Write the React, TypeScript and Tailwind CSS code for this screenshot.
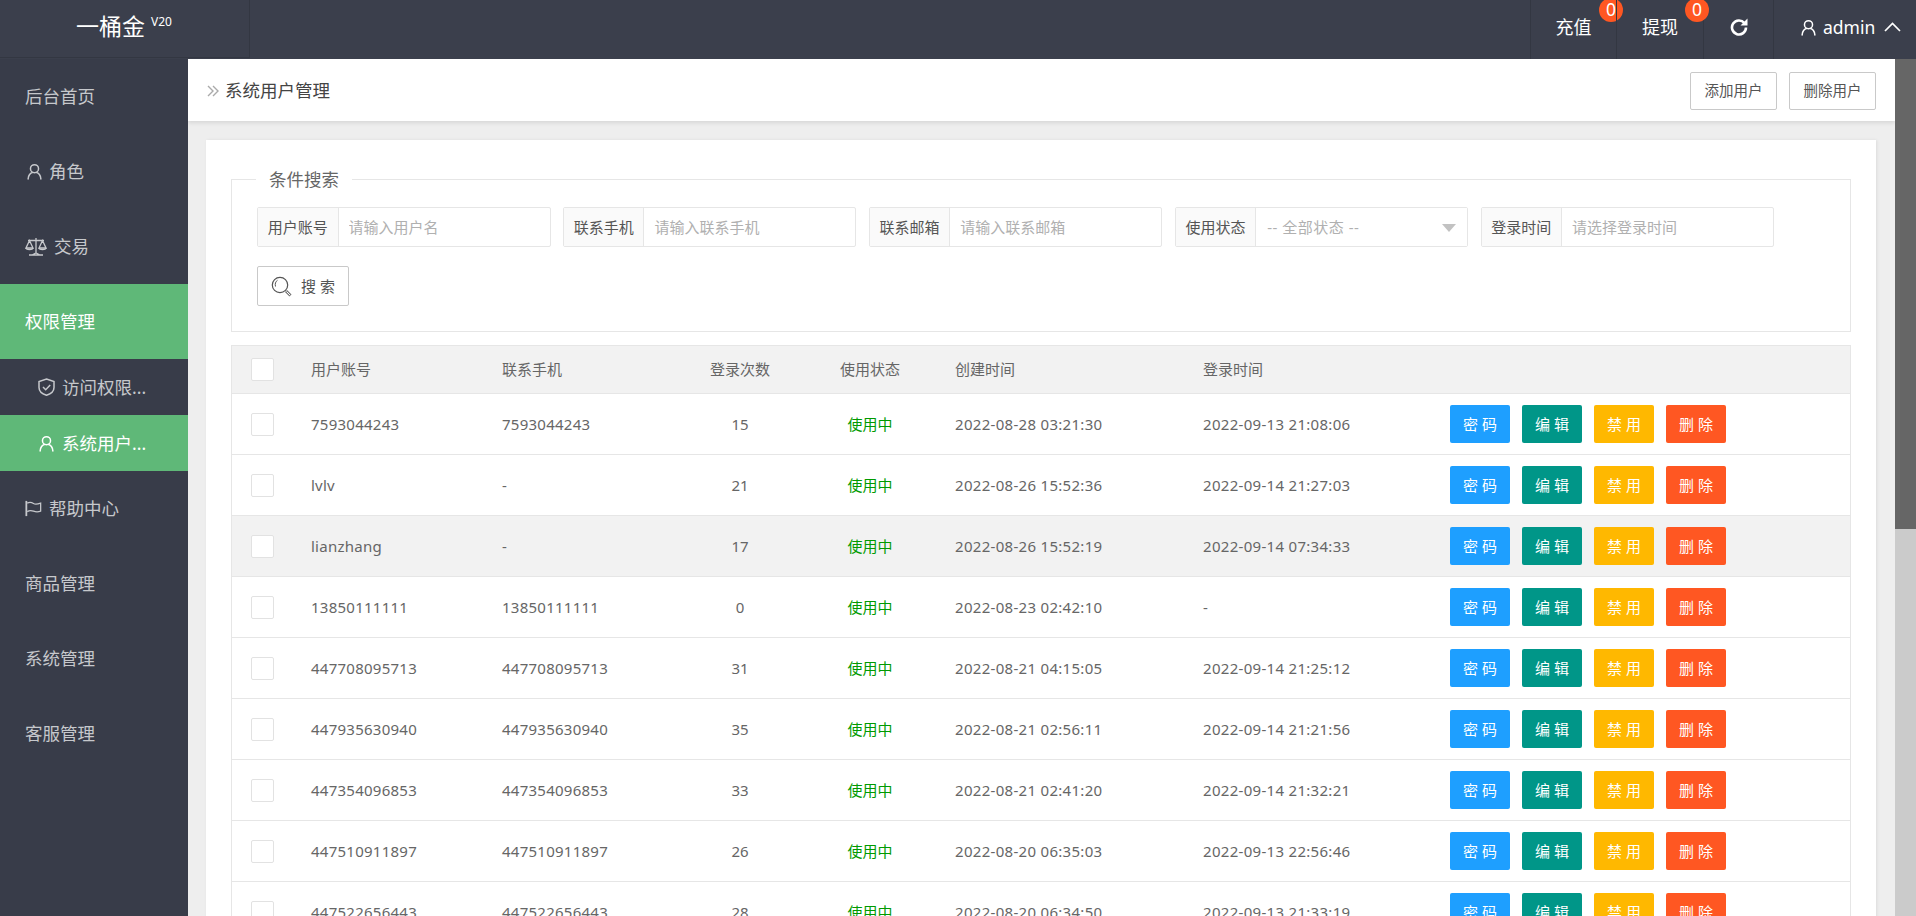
import { ReactNode } from 'react';

type UserRow = {
  account: string;
  phone: string;
  logins: number;
  created: string;
  lastLogin: string;
  hover?: boolean;
};

const rows: UserRow[] = [
  { account: '7593044243', phone: '7593044243', logins: 15, created: '2022-08-28 03:21:30', lastLogin: '2022-09-13 21:08:06' },
  { account: 'lvlv', phone: '-', logins: 21, created: '2022-08-26 15:52:36', lastLogin: '2022-09-14 21:27:03' },
  { account: 'lianzhang', phone: '-', logins: 17, created: '2022-08-26 15:52:19', lastLogin: '2022-09-14 07:34:33', hover: true },
  { account: '13850111111', phone: '13850111111', logins: 0, created: '2022-08-23 02:42:10', lastLogin: '-' },
  { account: '447708095713', phone: '447708095713', logins: 31, created: '2022-08-21 04:15:05', lastLogin: '2022-09-14 21:25:12' },
  { account: '447935630940', phone: '447935630940', logins: 35, created: '2022-08-21 02:56:11', lastLogin: '2022-09-14 21:21:56' },
  { account: '447354096853', phone: '447354096853', logins: 33, created: '2022-08-21 02:41:20', lastLogin: '2022-09-14 21:32:21' },
  { account: '447510911897', phone: '447510911897', logins: 26, created: '2022-08-20 06:35:03', lastLogin: '2022-09-13 22:56:46' },
  { account: '447522656443', phone: '447522656443', logins: 28, created: '2022-08-20 06:34:50', lastLogin: '2022-09-13 21:33:19' },
];

const UserIcon = ({ className }: { className?: string }) => (
  <svg viewBox="0 0 16 18" fill="none" stroke="currentColor" strokeWidth="1.6" className={className}>
    <circle cx="8" cy="6" r="4.3" />
    <path d="M1.2 17c0-4 2.6-6.7 4.6-6.9M14.8 17c0-4-2.6-6.7-4.6-6.9" strokeLinecap="round" />
  </svg>
);

const ScaleIcon = () => (
  <svg viewBox="0 0 22 19" fill="none" stroke="currentColor" strokeWidth="1.3" className="w-[22px] h-[19px]">
    <path d="M11 1v15M4 18h14M3 3.500h16M7 18l4-2 4 2" />
    <path d="M4.500 3.500 1 11h7zM17.500 3.500 14 11h7z" />
    <path d="M1 11c.5 2 6.500 2 7 0M14 11c.5 2 6.500 2 7 0" />
  </svg>
);

const FlagIcon = () => (
  <svg viewBox="0 0 19 17" fill="none" stroke="currentColor" className="w-[17px] h-[17px]">
    <path d="M1.500 0v17" strokeWidth="2" />
    <path d="M2.500 2.500c3-1.500 5.500-.5 7 .5s4 1 8-.5v9c-4 1.500-6 .8-8 0s-4-1.500-7 .5" strokeWidth="1.400" />
  </svg>
);

const ShieldIcon = () => (
  <svg viewBox="0 0 17 18" fill="none" stroke="currentColor" strokeWidth="1.500" className="w-[17px] h-[18px]">
    <path d="M8.500 1 16 3.500v6c0 4-3.500 6.500-7.500 7.800C4.500 16 1 13.500 1 9.500v-6z" />
    <path d="m5 9 2.700 2.700L12.200 7" />
  </svg>
);

const RefreshIcon = () => (
  <svg viewBox="0 0 18 18" fill="none" className="w-[18px] h-[18px]">
    <path d="M14.400 5A7 7 0 1 0 16 9.500" stroke="currentColor" strokeWidth="2.600" />
    <path d="M10.500 7.500h7V.5z" fill="currentColor" />
  </svg>
);

const SearchIcon = () => (
  <svg viewBox="0 0 21 21" fill="none" stroke="#555" className="w-[21px] h-[21px]">
    <circle cx="9" cy="9" r="7.700" strokeWidth="1.200" />
    <path d="M4.500 10.500C3.800 8 4.500 5.500 6.500 4.300" strokeWidth="1" />
    <path d="m15 15 4.500 4.500" strokeWidth="3" stroke="#777" />
    <path d="m15.500 15.500 3.500 3.500" strokeWidth="1" stroke="#fff" />
  </svg>
);

const MenuItem = ({ icon, label, active }: { icon?: ReactNode; label: string; active?: boolean }) => (
  <div className={`h-[75px] pl-[25px] flex items-center gap-[7px] text-[17.5px] ${active ? 'bg-[#5fb878] text-white' : 'text-[#c6c8cc]'}`}>
    {icon}
    <span>{label}</span>
  </div>
);

const SubItem = ({ icon, label, active }: { icon: ReactNode; label: string; active?: boolean }) => (
  <div className={`h-[56px] pl-[38px] flex items-center gap-[7px] text-[17.5px] ${active ? 'bg-[#5fb878] text-white' : 'text-[#c6c8cc]'}`}>
    <span className="w-[17px] flex justify-center">{icon}</span>
    <span>{label}</span>
  </div>
);

const Badge = () => (
  <span className="absolute left-[68px] -top-[2px] w-[24px] h-[24px] rounded-full bg-[#ff5722] text-white text-[17.5px] leading-none flex items-center justify-center">
    0
  </span>
);

const Field = ({ label, placeholder }: { label: string; placeholder: string }) => (
  <div className="w-[293.5px] h-[40px] flex border border-[#e6e6e6] rounded-[2px]">
    <label className="w-[80.5px] shrink-0 bg-[#fafafa] border-r border-[#e6e6e6] flex items-center justify-center text-[15px] text-[#555]">
      {label}
    </label>
    <input
      placeholder={placeholder}
      className="flex-1 min-w-0 pl-[10px] text-[15px] text-[#555] placeholder:text-[#b0b0b0] outline-none"
    />
  </div>
);

const StatusField = () => (
  <div className="w-[293.5px] h-[40px] flex border border-[#e6e6e6] rounded-[2px]">
    <label className="w-[80.5px] shrink-0 bg-[#fafafa] border-r border-[#e6e6e6] flex items-center justify-center text-[15px] text-[#555]">
      使用状态
    </label>
    <div className="relative flex-1 min-w-0">
      <select className="w-full h-full appearance-none pl-[11px] text-[15px] tracking-[0.5px] text-[#b0b0b0] outline-none bg-white">
        <option>-- 全部状态 --</option>
      </select>
      <svg viewBox="0 0 14 8" className="absolute right-[11px] top-[16px] w-[14px] h-[8px] pointer-events-none">
        <path d="M0 0h14L7 8z" fill="#c2c2c2" />
      </svg>
    </div>
  </div>
);

const ActionButton = ({ label, color }: { label: string; color: string }) => (
  <button className={`w-[60px] h-[38px] rounded-[2px] text-white text-[15px] ${color}`}>{label}</button>
);

const Checkbox = () => <div className="w-[23px] h-[23px] bg-white border border-[#e2e2e2] rounded-[2px]" />;

export default function App() {
  return (
    <div className="h-screen overflow-hidden flex flex-col font-['Noto_Sans','Noto_Sans_CJK_SC',sans-serif] text-[#666]">
      <header className="h-[59px] shrink-0 bg-[#3b3f4c] flex text-white">
        <div className="w-[250px] h-[58px] border-r border-b border-[#333742] pl-[76px] flex items-start">
          <span className="text-[23px] leading-[52px]">一桶金</span>
          <span className="ml-[6px] mt-[15px] text-[12px] leading-[14px]">V20</span>
        </div>
        <div className="flex-1" />
        <div className="relative w-[86px] pb-[5px] border-l border-[#333742] flex items-center justify-center text-[18px]">
          充值
          <Badge />
        </div>
        <div className="relative w-[87px] pb-[5px] border-l border-[#333742] flex items-center justify-center text-[18px]">
          提现
          <Badge />
        </div>
        <div className="w-[70px] pb-[5px] border-l border-[#333742] flex items-center justify-center">
          <RefreshIcon />
        </div>
        <div className="w-[143px] pb-[5px] border-l border-[#333742] pl-[27px] flex items-center text-[17.500px]">
          <UserIcon className="w-[15px] h-[17px]" />
          <span className="ml-[7px]">admin</span>
          <svg viewBox="0 0 17 10" fill="none" stroke="currentColor" strokeWidth="1.700" className="ml-[9px] w-[17px] h-[10px]">
            <path d="m1 9 7.500-7.500L16 9" />
          </svg>
        </div>
      </header>

      <div className="flex-1 min-h-0 flex">
        <aside className="w-[188px] shrink-0 bg-[#383c49] flex flex-col">
          <MenuItem label="后台首页" />
          <MenuItem icon={<UserIcon className="w-[15px] h-[17px] ml-[2px]" />} label="角色" />
          <MenuItem icon={<ScaleIcon />} label="交易" />
          <MenuItem label="权限管理" active />
          <SubItem icon={<ShieldIcon />} label="访问权限..." />
          <SubItem icon={<UserIcon className="w-[15px] h-[17px]" />} label="系统用户..." active />
          <MenuItem icon={<FlagIcon />} label="帮助中心" />
          <MenuItem label="商品管理" />
          <MenuItem label="系统管理" />
          <MenuItem label="客服管理" />
        </aside>

        <main className="flex-1 min-w-0 bg-[#eeeeee] flex flex-col overflow-hidden">
          <div className="h-[62px] shrink-0 bg-white shadow-[0_2px_4px_rgba(0,0,0,0.1)] pl-[19px] pr-[19px] flex items-center">
            <svg viewBox="0 0 12 12" fill="none" stroke="#aaa" strokeWidth="1.400" className="w-[12px] h-[12px] mt-[2px]">
              <path d="m1 1 5 5-5 5M6 1l5 5-5 5" />
            </svg>
            <h1 className="ml-[6px] text-[17.500px] font-normal text-[#444]">系统用户管理</h1>
            <div className="ml-auto flex gap-[12px] mt-[1px]">
              <button className="w-[87px] h-[38px] bg-white border border-[#c9c9c9] rounded-[2px] text-[14.500px] text-[#555]">添加用户</button>
              <button className="w-[87px] h-[38px] bg-white border border-[#c9c9c9] rounded-[2px] text-[14.500px] text-[#555]">删除用户</button>
            </div>
          </div>

          <section className="ml-[18px] mr-[19px] mt-[19px] px-[25px] pt-[27px] bg-white shadow-[1px_0_3px_rgba(0,0,0,0.08)] flex-1">
            <fieldset className="border border-[#e6e6e6] px-[25px] pb-[25px]">
              <legend className="ml-[-1px] px-[13px] text-[17.500px] leading-[24px] text-[#666]">条件搜索</legend>
              <div className="pt-[16px] flex gap-x-[12.400px]">
                <Field label="用户账号" placeholder="请输入用户名" />
                <Field label="联系手机" placeholder="请输入联系手机" />
                <Field label="联系邮箱" placeholder="请输入联系邮箱" />
                <StatusField />
                <Field label="登录时间" placeholder="请选择登录时间" />
              </div>
              <button className="mt-[19px] w-[92px] h-[40px] bg-white border border-[#c9c9c9] rounded-[2px] flex items-center justify-center gap-[9px] text-[15px] text-[#555]">
                <SearchIcon />
                <span>搜 索</span>
              </button>
            </fieldset>

            <div className="mt-[13px] border-x border-t border-[#e6e6e6]">
              <table className="w-full table-fixed border-separate border-spacing-0 text-[15px] text-[#666]">
                <colgroup>
                  <col className="w-[59px]" />
                  <col className="w-[191px]" />
                  <col className="w-[193px]" />
                  <col className="w-[130px]" />
                  <col className="w-[130px]" />
                  <col className="w-[248px]" />
                  <col className="w-[247px]" />
                  <col />
                </colgroup>
                <thead>
                  <tr className="h-[48px] bg-[#f2f2f2]">
                    <th className="pl-[19px] border-b border-[#e6e6e6] font-normal text-left"><Checkbox /></th>
                    <th className="pl-[20px] border-b border-[#e6e6e6] font-normal text-left">用户账号</th>
                    <th className="pl-[20px] border-b border-[#e6e6e6] font-normal text-left">联系手机</th>
                    <th className="border-b border-[#e6e6e6] font-normal text-center">登录次数</th>
                    <th className="border-b border-[#e6e6e6] font-normal text-center">使用状态</th>
                    <th className="pl-[20px] border-b border-[#e6e6e6] font-normal text-left">创建时间</th>
                    <th className="pl-[20px] border-b border-[#e6e6e6] font-normal text-left">登录时间</th>
                    <th className="border-b border-[#e6e6e6]" />
                  </tr>
                </thead>
                <tbody>
                  {rows.map((row) => (
                    <tr key={row.account} className={`h-[61px] ${row.hover ? 'bg-[#f2f2f2]' : 'bg-white'}`}>
                      <td className="pl-[19px] border-b border-[#e6e6e6]"><Checkbox /></td>
                      <td className="pl-[20px] border-b border-[#e6e6e6] tracking-[0.25px]">{row.account}</td>
                      <td className="pl-[20px] border-b border-[#e6e6e6] tracking-[0.25px]">{row.phone}</td>
                      <td className="border-b border-[#e6e6e6] text-center">{row.logins}</td>
                      <td className="border-b border-[#e6e6e6] text-center text-[#009a00]">使用中</td>
                      <td className="pl-[20px] border-b border-[#e6e6e6] tracking-[0.3px]">{row.created}</td>
                      <td className="pl-[20px] border-b border-[#e6e6e6] tracking-[0.3px]">{row.lastLogin}</td>
                      <td className="pl-[20px] border-b border-[#e6e6e6]">
                        <div className="flex gap-[12px] w-[276px]">
                          <ActionButton label="密 码" color="bg-[#1e9fff]" />
                          <ActionButton label="编 辑" color="bg-[#009688]" />
                          <ActionButton label="禁 用" color="bg-[#ffb800]" />
                          <ActionButton label="删 除" color="bg-[#ff5722]" />
                        </div>
                      </td>
                    </tr>
                  ))}
                </tbody>
              </table>
            </div>
          </section>
        </main>

        {/* page scrollbar as it looks in the screenshot */}
        <div className="w-[21px] shrink-0 bg-[#cbcbcb]">
          <div className="h-[470px] bg-[#666666]" />
        </div>
      </div>
    </div>
  );
}
